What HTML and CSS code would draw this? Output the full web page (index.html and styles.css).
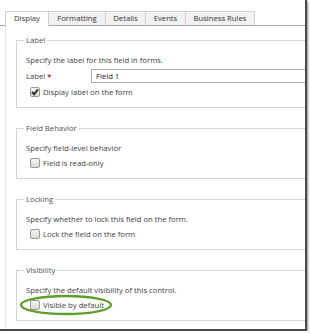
FILE: index.html
```html
<!DOCTYPE html>
<html lang="en">
<head>
  <meta charset="UTF-8" />
  <title>Field Properties - Display</title>
  <link rel="stylesheet" href="styles.css">
</head>
<body>
  <div class="frame">
    <div class="tabs">
      <div class="tab active tab-display">Display</div>
      <div class="tab tab-formatting">Formatting</div>
      <div class="tab tab-details">Details</div>
      <div class="tab tab-events">Events</div>
      <div class="tab tab-rules">Business Rules</div>
    </div>

    <div class="panel">
      <fieldset class="group">
        <legend>Label</legend>
        <div class="desc">Specify the label for this field in forms.</div>
        <div class="label-row">
          <span class="field-name">Label <span class="req">*</span></span>
          <span class="text-input">Field 1</span>
        </div>
        <div class="check-row"><span class="box checked"></span>Display label on the form</div>
      </fieldset>

      <fieldset class="group">
        <legend>Field Behavior</legend>
        <div class="desc">Specify field-level behavior</div>
        <div class="check-row"><span class="box"></span>Field is read-only</div>
      </fieldset>

      <fieldset class="group">
        <legend>Locking</legend>
        <div class="desc">Specify whether to lock this field on the form.</div>
        <div class="check-row"><span class="box"></span>Lock the field on the form</div>
      </fieldset>

      <fieldset class="group">
        <legend>Visibility</legend>
        <div class="desc">Specify the default visibility of this control.</div>
        <div class="check-row"><span class="box"></span>Visible by default</div>
      </fieldset>
    </div>

    <!-- annotation drawn over the screenshot -->
    <svg class="highlight" width="100" height="26" viewBox="0 0 100 26">
      <ellipse cx="48" cy="13" rx="45" ry="9" fill="none" stroke="#5f9e2c" stroke-width="2.4" />
    </svg>
  </div>
</body>
</html>
```

FILE: styles.css
```css
:root {
  --text: #3d3d3d;
  --legend: #505050;
  --line: #d4d4d4;
  --tab-line: #a9a9a9;
}
body {
  margin: 0;
  background: #fff;
  font-family: "Open Sans", "Liberation Sans", sans-serif;
  font-size: 7.7px;
  color: var(--text);
}
.frame {
  position: relative;
  width: 305px;
  height: 329px;
  overflow: hidden;
  border-right: 2px solid #4a4a4a;
  border-bottom: 2px solid #4a4a4a;
  box-shadow: 1px 1px 2px rgba(0,0,0,0.45);
}
.tabs {
  display: flex;
  margin-top: 11px;
  padding-left: 5px;
  border-bottom: 1px solid var(--tab-line);
}
.tab {
  height: 13px;
  line-height: 13px;
  border: 1px solid #cfcfcf;
  border-bottom: none;
  margin-right: -1px;
  background: #f2f2f2;
  color: #333;
  text-align: center;
}
.tab.active {
  background: #fff;
  margin-bottom: -1px;
  height: 14px;
}
.tab-display { width: 42px; }
.tab-formatting { width: 56px; }
.tab-details { width: 39px; }
.tab-events { width: 39px; }
.tab-rules { width: 68px; }

.panel {
  margin-left: 5px;
  padding-top: 8px;
  border-left: 1px solid #e6e6e6;
  height: 300px;
}
.group {
  margin: 0 -40px 14px 10px;
  padding: 0 0 9px 7px;
  border: 1px solid var(--line);
  min-width: 0;
}
.group legend {
  padding: 0 2px;
  line-height: 12px;
  color: var(--legend);
}
.desc {
  margin-top: 8px;
  line-height: 12px;
  padding-left: 2px;
}
.label-row {
  display: flex;
  align-items: center;
  margin-top: 3px;
  height: 14px;
  padding-left: 2px;
}
.field-name {
  width: 65px;
}
.req {
  color: #d21a1a;
  font-weight: bold;
}
.text-input {
  flex: 1;
  height: 12px;
  line-height: 12px;
  border: 1px solid #ababab;
  padding-left: 4px;
  color: #222;
}
.check-row {
  display: flex;
  align-items: center;
  margin-top: 3px;
  height: 12px;
  padding-left: 6px;
}
.box {
  width: 8px;
  height: 8px;
  margin-right: 3px;
  border: 1px solid #9a9a9a;
  border-radius: 2px;
  background: linear-gradient(#f4f4f4, #d9d9d9);
  position: relative;
}
.box.checked::after {
  content: "";
  position: absolute;
  left: 2px;
  top: 0;
  width: 2px;
  height: 5px;
  border: solid #333;
  border-width: 0 2px 2px 0;
  transform: rotate(40deg);
}
.highlight {
  position: absolute;
  left: 18px;
  top: 292px;
}
```
